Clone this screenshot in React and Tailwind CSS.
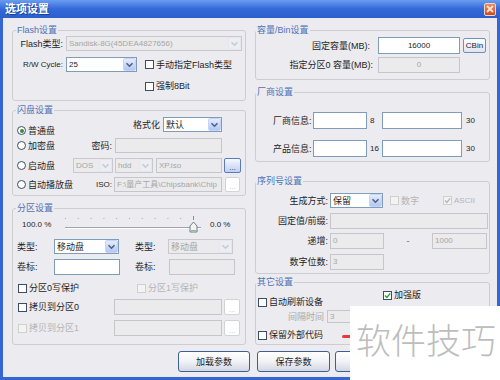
const sans = "font-['Liberation_Sans','Noto_Sans_CJK_SC',sans-serif]";

function Arrow({ disabled }) {
  return (
    <span
      className={`w-[13px] h-[13px] shrink-0 rounded-[2px] border flex items-center justify-center ${
        disabled ? 'border-[#e4e7ee] bg-[#eceef3]' : 'border-[#c6d5f5] bg-gradient-to-b from-[#e4ecfd] to-[#b3c7f4]'
      }`}
    >
      <svg width="9" height="6" viewBox="0 0 9 6">
        <path d="M1.5 1.2 L4.5 4.2 L7.5 1.2" fill="none" stroke={disabled ? '#c3cad8' : '#4d6185'} strokeWidth="1.6" />
      </svg>
    </span>
  );
}

function Combo({ value, disabled, className = '', latin }) {
  return (
    <div
      className={`h-[15px] border flex items-center overflow-hidden ${
        disabled ? 'border-[#c9c8cc] bg-[#ebebed] text-[#a5a5a5]' : 'border-[#7f9db9] bg-white'
      } ${className}`}
    >
      <span className={`flex-1 pl-[2px] whitespace-nowrap overflow-hidden ${latin ? 'text-[8px]' : ''}`}>{value}</span>
      <Arrow disabled={disabled} />
    </div>
  );
}

function Input({ value, disabled, className = '', center }) {
  return (
    <div
      className={`border flex items-center overflow-hidden whitespace-nowrap text-[8px] ${center ? 'justify-center' : 'pl-[2px]'} ${
        disabled ? 'border-[#c6c5ca] bg-[#ebebed] text-[#a5a5a5]' : 'border-[#7f9db9] bg-white text-[#1e1e1e]'
      } ${className}`}
    >
      {value}
    </div>
  );
}

function Check({ checked, disabled, children, className = '' }) {
  return (
    <div className={`flex items-center gap-[2px] whitespace-nowrap ${disabled ? 'text-[#b4b4b4]' : ''} ${className}`}>
      <span
        className={`w-[9px] h-[9px] shrink-0 border flex items-center justify-center ${
          disabled ? 'border-[#cfcfcf] bg-[#f3f3f3]' : 'border-[#3b4d63] bg-white'
        }`}
      >
        {checked && (
          <svg width="7" height="7" viewBox="0 0 7 7">
            <path d="M1 3.4 L2.9 5.4 L6.2 1.4" fill="none" stroke={disabled ? '#b5b5b5' : '#23a023'} strokeWidth="1.4" />
          </svg>
        )}
      </span>
      {children}
    </div>
  );
}

function Radio({ checked, children, className = '' }) {
  return (
    <div className={`flex items-center gap-[2px] whitespace-nowrap ${className}`}>
      <span className="w-[9px] h-[9px] shrink-0 rounded-full border border-[#3b4d63] bg-white flex items-center justify-center">
        {checked && <span className="w-[4px] h-[4px] rounded-full bg-[#3d8a3d]" />}
      </span>
      {children}
    </div>
  );
}

function Dots({ disabled, className = '' }) {
  return (
    <div
      className={`h-[15px] rounded-[2px] border flex items-end justify-center text-[8px] leading-[9px] ${
        disabled ? 'border-[#d3d3d6] bg-white text-[#c4c4c4]' : 'border-[#5a7bb5] bg-gradient-to-b from-[#f5f8fe] to-[#bfd0f1] text-[#333]'
      } ${className}`}
    >
      ...
    </div>
  );
}

function Btn({ children, className = '' }) {
  return (
    <div
      className={`h-[21px] rounded-[3px] border border-[#3f5f93] bg-gradient-to-b from-white via-[#f1f2f6] to-[#d3d7e3] flex items-center justify-center ${className}`}
    >
      {children}
    </div>
  );
}

function Group({ title, right, className = '', children }) {
  return (
    <fieldset className={`border border-[#cdccd2] rounded-[3px] ${className}`}>
      <legend className={`px-[1px] leading-[12px] text-[#4d72b6] ${right ? '' : 'ml-[3px]'}`}>{title}</legend>
      {children}
    </fieldset>
  );
}

function Slider() {
  const ticks = [];
  for (let i = 0; i < 11; i++) ticks.push(3 + i * 12.8);
  return (
    <svg width="143" height="18" viewBox="0 0 143 18" className="shrink-0">
      {ticks.map((x) => (
        <rect key={x} x={x} y="2" width="1" height="1" fill="#a7a7ab" />
      ))}
      <rect x="131" y="0" width="1" height="4" fill="#8e8e92" />
      <rect x="3" y="11" width="136" height="1" fill="#a3a3a8" />
      <rect x="3" y="12" width="136" height="1" fill="#ffffff" />
      <path d="M128 10 L131.5 6 L135 10 L135 16 L128 16 Z" fill="#f3f3ef" stroke="#6d7f8f" strokeWidth="1" />
      <rect x="129" y="14" width="5" height="1" fill="#7cc47c" />
    </svg>
  );
}

export default function App() {
  return (
    <div className={`w-[500px] h-[380px] relative overflow-hidden bg-[#3566d2] flex flex-col text-[9px] leading-[12px] text-[#1e1e1e] ${sans}`}>
      {/* title bar */}
      <div className="h-[18px] shrink-0 flex items-center bg-gradient-to-b from-[#6a9cf0] via-[#3369da] to-[#2b5ecb] pl-[5px] pr-[4px]">
        <span className="text-white font-bold text-[11px] leading-[14px] [text-shadow:1px_1px_0_#1c3f8f]">选项设置</span>
        <span className="ml-auto w-[12px] h-[13px] rounded-[2px] border border-[#f0d6c8] bg-gradient-to-b from-[#ec8a5e] to-[#cc4a1f] flex items-center justify-center">
          <svg width="8" height="8" viewBox="0 0 8 8">
            <path d="M1 1 L7 7 M7 1 L1 7" stroke="#fbe7d2" strokeWidth="1.8" />
          </svg>
        </span>
      </div>

      {/* body */}
      <div className="flex-1 mx-[3px] mb-[3px] bg-[#ecebf0] flex flex-col">
        <div className="flex pt-[6px]">
          {/* left column */}
          <div className="ml-[9px] w-[234px] flex flex-col">
            <Group title="Flash设置" className="pb-[7px]">
              <div className="flex items-center h-[15px]">
                <span className="w-[50px] text-right">Flash类型:</span>
                <Combo value="Sandisk-8G(45DEA4827656)" disabled latin className="ml-[3px] w-[176px]" />
              </div>
              <div className="flex items-center h-[15px] mt-[6px]">
                <span className="w-[50px] text-right text-[8px]">R/W Cycle:</span>
                <Combo value="25" latin className="ml-[3px] w-[71px]" />
                <Check className="ml-[8px]">手动指定Flash类型</Check>
              </div>
              <div className="flex items-center h-[14px] mt-[7px]">
                <Check className="ml-[132px]">强制8Bit</Check>
              </div>
            </Group>

            <Group title="闪盘设置" className="mt-[3px] pb-[3px]">
              <div className="flex items-center h-[15px] mt-[1px]">
                <Radio checked className="ml-[4px] w-[56px] translate-y-[6px]">普通盘</Radio>
                <span className="w-[87px] text-right">格式化</span>
                <Combo value="默认" className="ml-[3px] w-[59px]" />
              </div>
              <div className="flex items-center h-[15px] mt-[6px]">
                <Radio className="ml-[4px] w-[56px]">加密盘</Radio>
                <span className="w-[39px] text-right">密码:</span>
                <Input disabled className="ml-[3px] w-[107px] h-[15px]" />
              </div>
              <div className="flex items-center h-[15px] mt-[5px]">
                <Radio className="ml-[4px] w-[56px]">启动盘</Radio>
                <Combo value="DOS" disabled latin className="w-[40px]" />
                <Combo value="hdd" disabled latin className="ml-[2px] w-[38px]" />
                <Input value="XP.iso" disabled className="ml-[3px] w-[66px] h-[15px]" />
                <Dots className="ml-[2px] w-[17px]" />
              </div>
              <div className="flex items-center h-[15px] mt-[4px]">
                <Radio className="ml-[4px] w-[56px]">自动播放盘</Radio>
                <span className="w-[39px] text-right text-[8px]">ISO:</span>
                <Input value="F:\量产工具\Chipsbank\Chip" disabled className="ml-[2px] w-[108px] h-[15px]" />
                <Dots disabled className="ml-[3px] w-[15px]" />
              </div>
            </Group>

            <Group title="分区设置" className="mt-[6px] pb-[8px]">
              <div className="flex items-center h-[18px] mt-[2px]">
                <span className="ml-[9px] w-[40px] text-[8px]">100.0 %</span>
                <Slider />
                <span className="ml-[5px] text-[8px]">0.0 %</span>
              </div>
              <div className="flex items-center h-[15px] mt-[5px]">
                <span className="ml-[4px] w-[37px]">类型:</span>
                <Combo value="移动盘" className="w-[65px]" />
                <span className="ml-[16px] w-[33px]">类型:</span>
                <Combo value="移动盘" disabled className="w-[65px]" />
              </div>
              <div className="flex items-center h-[16px] mt-[5px]">
                <span className="ml-[4px] w-[37px]">卷标:</span>
                <Input className="w-[66px] h-[16px]" />
                <span className="ml-[15px] w-[34px]">卷标:</span>
                <Input disabled className="w-[66px] h-[16px]" />
              </div>
              <div className="flex items-center h-[14px] mt-[6px]">
                <Check className="ml-[5px] w-[119px]">分区0写保护</Check>
                <Check disabled>分区1写保护</Check>
              </div>
              <div className="flex items-center h-[16px] mt-[4px]">
                <Check className="ml-[5px] w-[96px]">拷贝到分区0</Check>
                <Input disabled className="w-[108px] h-[16px]" />
                <Dots disabled className="ml-[2px] w-[16px] h-[16px]" />
              </div>
              <div className="flex items-center h-[16px] mt-[5px]">
                <Check disabled className="ml-[5px] w-[96px]">拷贝到分区1</Check>
                <Input disabled className="w-[108px] h-[16px]" />
                <Dots disabled className="ml-[2px] w-[16px] h-[16px]" />
              </div>
            </Group>
          </div>

          {/* right column */}
          <div className="ml-[9px] w-[235px] flex flex-col">
            <Group title="容量/Bin设置" right className="pb-[6px]">
              <div className="flex items-center h-[17px] mt-[1px]">
                <span className="w-[114px] text-right">固定容量(MB):</span>
                <Input value="16000" center className="ml-[8px] w-[82px] h-[17px]" />
                <div className="ml-[3px] w-[23px] h-[15px] rounded-[2px] border border-[#6f8fc2] bg-gradient-to-b from-white to-[#dfe4ee] flex items-center justify-center text-[8px]">
                  CBin
                </div>
              </div>
              <div className="flex items-center h-[16px] mt-[3px]">
                <span className="w-[117px] text-right">指定分区0 容量(MB):</span>
                <Input value="0" disabled center className="ml-[5px] w-[82px] h-[16px]" />
              </div>
            </Group>

            <Group title="厂商设置" right className="mt-[6px] pb-[4px]">
              <div className="flex items-center h-[17px] mt-[14px]">
                <span className="ml-[17px] w-[40px]">厂商信息:</span>
                <Input className="w-[54px] h-[17px]" />
                <span className="w-[15px] pl-[3px] text-[8px]">8</span>
                <Input className="w-[80px] h-[17px]" />
                <span className="pl-[4px] text-[8px]">30</span>
              </div>
              <div className="flex items-center h-[17px] mt-[11px]">
                <span className="ml-[17px] w-[40px]">产品信息:</span>
                <Input className="w-[54px] h-[17px]" />
                <span className="w-[15px] pl-[3px] text-[8px]">16</span>
                <Input className="w-[80px] h-[17px]" />
                <span className="pl-[4px] text-[8px]">30</span>
              </div>
            </Group>

            <Group title="序列号设置" right className="mt-[13px] pb-[3px]">
              <div className="flex items-center h-[15px] mt-[6px]">
                <span className="w-[72px] text-right">生成方式:</span>
                <Combo value="保留" className="ml-[2px] w-[53px]" />
                <Check disabled className="ml-[7px] w-[53px]">数字</Check>
                <Check checked disabled><span className="text-[8px]">ASCII</span></Check>
              </div>
              <div className="flex items-center h-[16px] mt-[5px]">
                <span className="w-[72px] text-right">固定值/前缀:</span>
                <Input disabled className="ml-[2px] w-[158px] h-[16px]" />
              </div>
              <div className="flex items-center h-[16px] mt-[4px]">
                <span className="w-[72px] text-right">递增:</span>
                <Input value="0" disabled className="ml-[2px] w-[54px] h-[16px]" />
                <span className="w-[48px] text-center text-[#666]">-</span>
                <Input value="1000" disabled className="w-[55px] h-[16px]" />
              </div>
              <div className="flex items-center h-[16px] mt-[5px]">
                <span className="w-[72px] text-right">数字位数:</span>
                <Input value="3" disabled className="ml-[2px] w-[54px] h-[16px]" />
              </div>
            </Group>

            <Group title="其它设置" right className="mt-[2px] pb-[3px]">
              <div className="flex items-start h-[20px]">
                <Check className="ml-[2px] w-[125px] mt-[8px]">自动刷新设备</Check>
                <Check checked className="mt-[1px]">加强版</Check>
              </div>
              <div className="flex items-center h-[13px] mt-[2px]">
                <span className="ml-[32px] w-[39px] text-[#a9a9a9]">间隔时间</span>
                <Input value="3" disabled className="w-[40px] h-[13px]" />
              </div>
              <div className="flex items-center h-[12px] mt-[6px]">
                <Check className="ml-[2px] w-[84px]">保留外部代码</Check>
                <span className="w-[9px] h-[3px] rounded-full bg-[#e23a3a] mt-[3px]" />
              </div>
            </Group>
          </div>
        </div>

        {/* buttons */}
        <div className="flex pl-[175px] mt-[6px]">
          <Btn className="w-[72px]">加载参数</Btn>
          <Btn className="ml-[7px] w-[73px]">保存参数</Btn>
          <Btn className="ml-[5px] w-[73px]" />
        </div>
      </div>

      {/* watermark overlay */}
      <div className="absolute left-[350px] top-[306px] right-0 bottom-0 bg-white pl-[6px] pt-[15px]">
        <span className="text-[35px] leading-[35px] text-[#bdbdbd] font-light font-['Noto_Sans_CJK_SC',sans-serif] whitespace-nowrap">
          软件技巧
        </span>
      </div>
    </div>
  );
}
